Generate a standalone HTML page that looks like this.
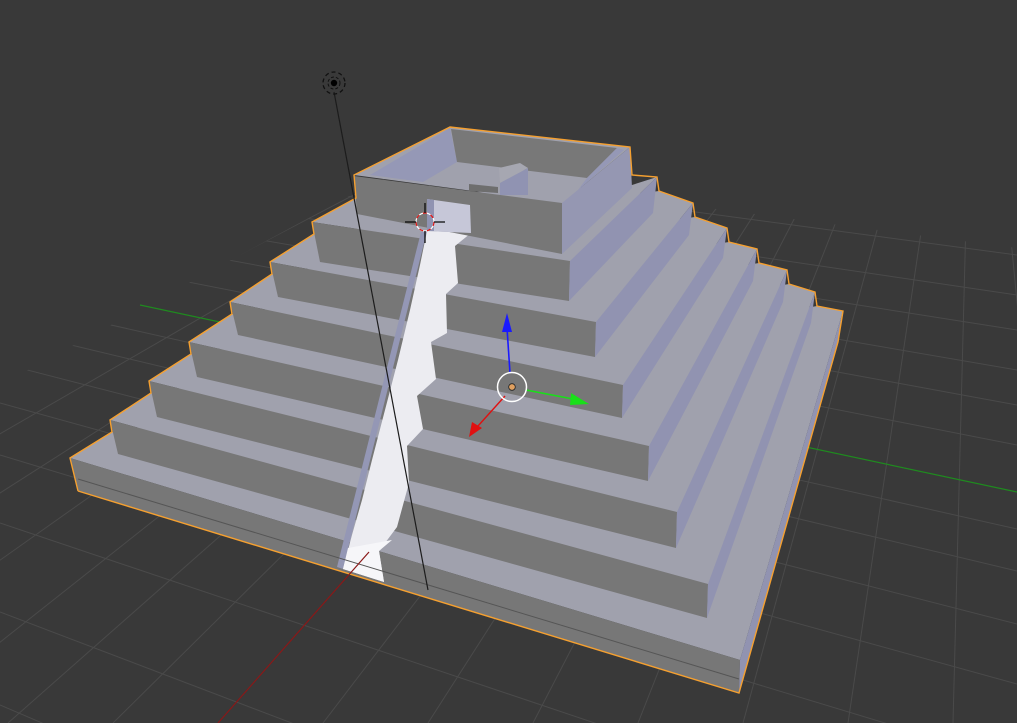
<!DOCTYPE html>
<html><head><meta charset="utf-8"><style>
html,body{margin:0;padding:0;background:#393939;width:1017px;height:723px;overflow:hidden;}
svg{display:block;overflow:hidden;}
</style></head><body>
<svg width="1017" height="723" viewBox="0 0 1017 723" xmlns="http://www.w3.org/2000/svg">
<defs>
<clipPath id="gc"><polygon points="0,385 401,168 1017,248 1017,723 0,723"/></clipPath>
</defs>
<rect width="1017" height="723" fill="#393939"/>
<g clip-path="url(#gc)" stroke="#4a4a4a" stroke-width="1" fill="none">
<line x1="0" y1="119" x2="1017" y2="255"/>
<line x1="0" y1="145" x2="1017" y2="295"/>
<line x1="0" y1="170" x2="1017" y2="330"/>
<line x1="0" y1="195" x2="1017" y2="370"/>
<line x1="0" y1="218" x2="1017" y2="405"/>
<line x1="0" y1="245" x2="1017" y2="445"/>
<line x1="0" y1="300" x2="1017" y2="529"/>
<line x1="0" y1="328" x2="1017" y2="571"/>
<line x1="0" y1="363" x2="1017" y2="624"/>
<line x1="0" y1="403" x2="1017" y2="684"/>
<line x1="0" y1="455" x2="1017" y2="763"/>
<line x1="0" y1="523" x2="1017" y2="865"/>
<line x1="0" y1="612" x2="1017" y2="999"/>
<line x1="0" y1="705" x2="1017" y2="1140"/>
<line x1="-1500" y1="723" x2="975" y2="-130"/>
<line x1="-1250" y1="723" x2="975" y2="-130"/>
<line x1="-1030" y1="723" x2="975" y2="-130"/>
<line x1="-830" y1="723" x2="975" y2="-130"/>
<line x1="-656" y1="723" x2="975" y2="-130"/>
<line x1="-500" y1="723" x2="975" y2="-130"/>
<line x1="-360" y1="723" x2="975" y2="-130"/>
<line x1="-230" y1="723" x2="975" y2="-130"/>
<line x1="-102" y1="723" x2="975" y2="-130"/>
<line x1="8" y1="723" x2="975" y2="-130"/>
<line x1="113" y1="723" x2="975" y2="-130"/>
<line x1="323" y1="723" x2="975" y2="-130"/>
<line x1="428" y1="723" x2="975" y2="-130"/>
<line x1="533" y1="723" x2="975" y2="-130"/>
<line x1="638" y1="723" x2="975" y2="-130"/>
<line x1="743" y1="723" x2="975" y2="-130"/>
<line x1="848" y1="723" x2="975" y2="-130"/>
<line x1="953" y1="723" x2="975" y2="-130"/>
<line x1="1058" y1="723" x2="975" y2="-130"/>
<line x1="1163" y1="723" x2="975" y2="-130"/>
</g>
<line x1="140" y1="305" x2="1017" y2="492" stroke="#1f8a1f" stroke-width="1.2"/>

<g stroke="none">
<polygon fill="#a0a1ad" points="70,458 740,660 843,311 817,306 112,432"/>
<polygon fill="#777777" points="70,458 740,660 739,693 78,491"/>
<polygon fill="#9193b1" points="740,660 843,311 838,342 739,693"/>
<polygon fill="#a0a1ad" points="110,420 708,584 815,292 789,284 151,393"/>
<polygon fill="#777777" points="110,420 708,584 707,618 118,454"/>
<polygon fill="#9193b1" points="708,584 815,292 811,323 707,618"/>
<polygon fill="#a0a1ad" points="149,381 677,512 787,270 759,263 191,354"/>
<polygon fill="#777777" points="149,381 677,512 676,548 157,417"/>
<polygon fill="#9193b1" points="677,512 787,270 783,302 676,548"/>
<polygon fill="#a0a1ad" points="189,342 649,446 757,249 729,242 232,314"/>
<polygon fill="#777777" points="189,342 649,446 648,481 197,377"/>
<polygon fill="#9193b1" points="649,446 757,249 753,281 648,481"/>
<polygon fill="#a0a1ad" points="230,302 623,385 727,228 695,217 272,274"/>
<polygon fill="#777777" points="230,302 623,385 622,418 238,335"/>
<polygon fill="#9193b1" points="623,385 727,228 723,258 622,418"/>
<polygon fill="#a0a1ad" points="270,262 596,322 693,203 659,191 314,234"/>
<polygon fill="#777777" points="270,262 596,322 595,357 278,297"/>
<polygon fill="#9193b1" points="596,322 693,203 689,235 595,357"/>
<polygon fill="#a0a1ad" points="312,222 570,261 657,177 632,185 356,198"/>
<polygon fill="#777777" points="312,222 570,261 569,301 320,262"/>
<polygon fill="#9193b1" points="570,261 657,177 653,213 569,301"/>
</g>

<polygon fill="#9497b5" points="337,567 343,569 427,231 421,232"/>
<polygon fill="#ececf1" points="343,569 352,535 362,500 372,460 385,410 398,360 410,310 420,265 427,231 471,233 455,246 458,283 446,294 447,333 431,342 436,379 417,396 423,429 407,446 409,483 397,527 379,551 384,582"/>
<polygon fill="#f6f6f9" points="348,548 392,540 379,551 384,582 343,569"/>
<line x1="78" y1="479" x2="739" y2="679" stroke="#555" stroke-width="1"/>

<polygon fill="#a0a1ad" points="354,175 450,127 630,147 562,203"/>
<polygon fill="#9598b6" points="370,175 450,128 457,162 423,182"/>
<polygon fill="#787878" points="451,129 617,148 587,178 457,162"/>
<polygon fill="#9598b6" points="587,178 617,148 624,150 578,190"/>
<polygon fill="#a6a7b1" points="499,168 520,163 528,168 500,183"/>
<polygon fill="#9093b2" points="500,183 528,168 528,195 500,195"/>
<polygon fill="#6e6e6e" points="469,184 498,187 498,193 469,191"/>
<polygon fill="#777777" points="354,176 562,203 562,254 357,214"/>
<polygon fill="#c6c7d8" points="427,199 470,205 471,233 427,231"/>
<polygon fill="#9093b2" points="427,199 434,200 434,231 427,231"/>
<polygon fill="#9597b2" points="562,203 630,147 632,188 562,254"/>

<polyline fill="none" stroke="#f5a030" stroke-width="1.4" points="78,491 739,693 838,342 843,311 817,306 815,292 789,284 787,270 759,263 757,249 729,242 727,228 695,217 693,203 659,191 657,177 632,175 630,147 450,127 354,175 356,198 312,222 314,234 270,262 272,274 230,302 232,314 189,342 191,354 149,381 151,393 110,420 112,432 70,458 78,491"/>

<line x1="218" y1="723" x2="369" y2="552" stroke="#8a1818" stroke-width="1.2"/>

<line x1="334" y1="92" x2="428" y2="590" stroke="#1c1c1c" stroke-width="1.2"/>
<circle cx="334" cy="83" r="11" fill="none" stroke="#111" stroke-width="1.3" stroke-dasharray="4 3"/>
<circle cx="334" cy="83" r="6" fill="none" stroke="#111" stroke-width="1" stroke-dasharray="3 2"/>
<circle cx="334" cy="83" r="3.2" fill="#000"/>

<circle cx="425" cy="222" r="9" fill="none" stroke="#fff" stroke-width="1.2"/>
<circle cx="425" cy="222" r="9" fill="none" stroke="#e01010" stroke-width="1.2" stroke-dasharray="4 4"/>
<line x1="405" y1="222" x2="416" y2="222" stroke="#000" stroke-width="1.2"/>
<line x1="434" y1="222" x2="445" y2="222" stroke="#000" stroke-width="1.2"/>
<line x1="425" y1="203" x2="425" y2="213" stroke="#000" stroke-width="1.2"/>
<line x1="425" y1="231" x2="425" y2="243" stroke="#000" stroke-width="1.2"/>

<line x1="510" y1="373" x2="507" y2="328" stroke="#1a1aff" stroke-width="1.6"/>
<polygon fill="#1a1aff" points="507,313 502,332 512,332"/>
<line x1="526" y1="390" x2="573" y2="399" stroke="#18e018" stroke-width="1.6"/>
<polygon fill="#18e018" points="589,404 571,393 570,405"/>
<line x1="505" y1="396" x2="478" y2="426" stroke="#e01010" stroke-width="1.4"/>
<polygon fill="#e01010" points="469,437 472,422 482,428"/>
<circle cx="512" cy="387" r="14.5" fill="none" stroke="#fff" stroke-width="1.5"/>
<circle cx="512" cy="387" r="3.3" fill="#e0a060" stroke="#222" stroke-width="0.8"/>
</svg>
</body></html>
